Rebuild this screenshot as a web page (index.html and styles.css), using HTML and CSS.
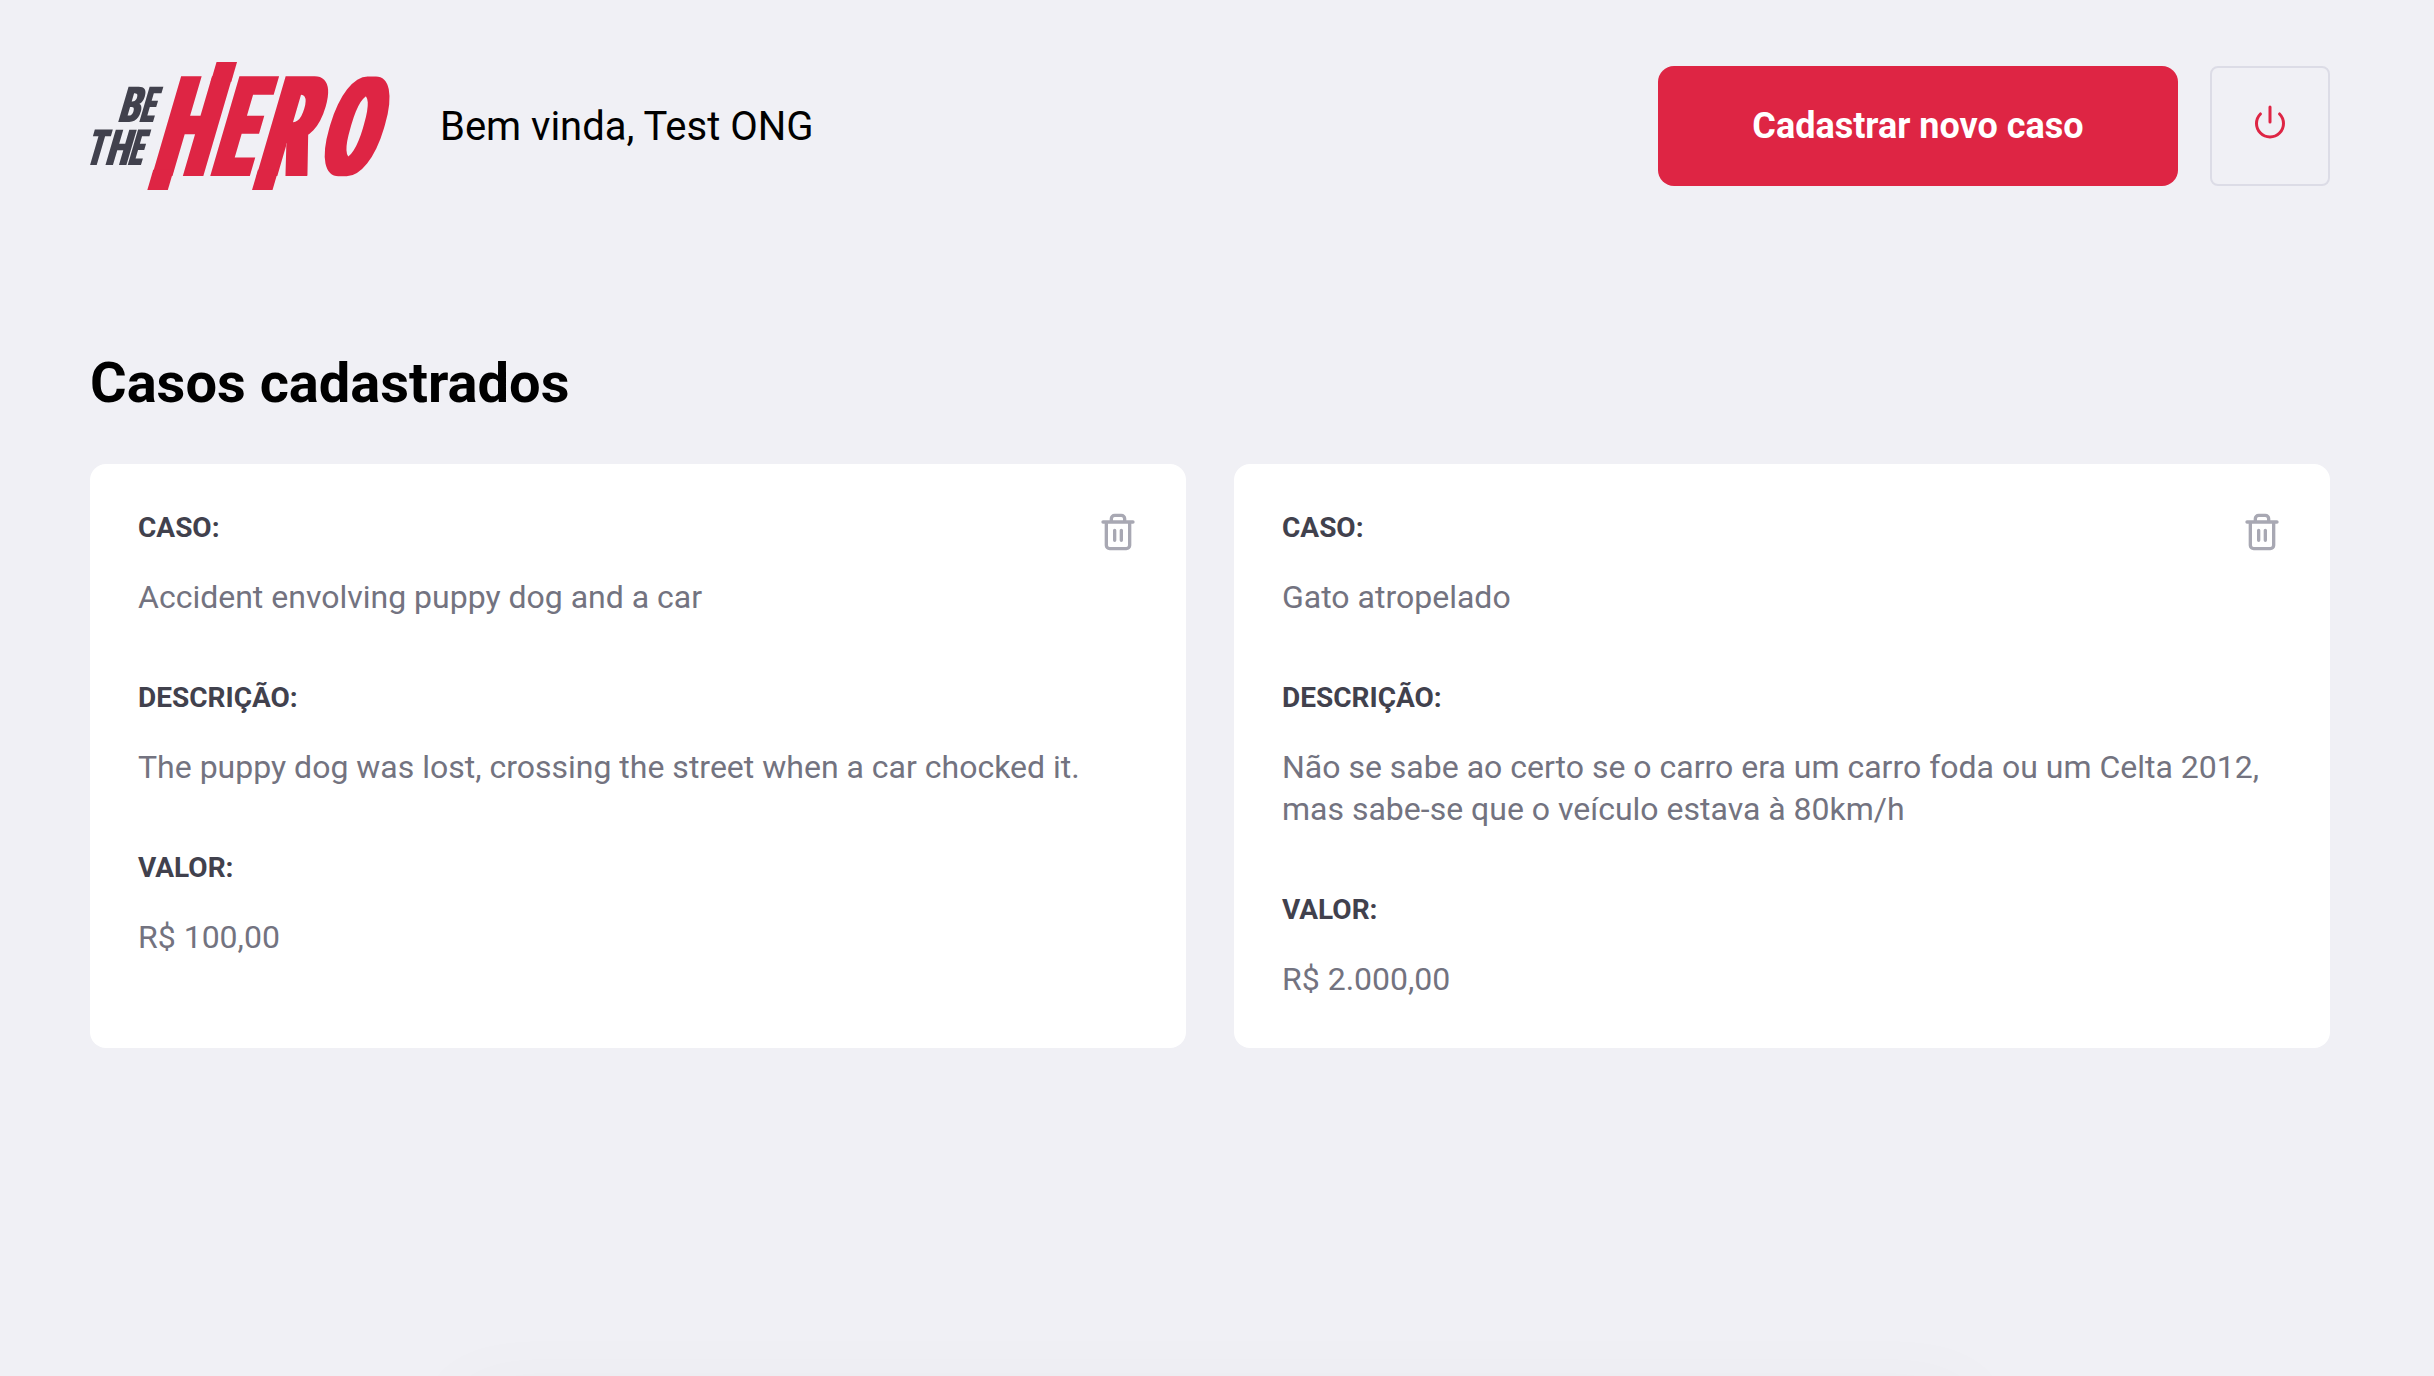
FILE: index.html
```html
<!DOCTYPE html>
<html lang="pt-BR">
<head>
<meta charset="utf-8">
<title>Be The Hero</title>
<link rel="stylesheet" href="styles.css">
</head>
<body>
<div class="profile">
  <header class="header">
    <svg class="logo" viewBox="90 62 302 128" role="img" aria-label="Be The Hero">
      <defs>
        <filter id="widen-small" x="-5%" y="-5%" width="110%" height="110%" color-interpolation-filters="sRGB"><feMorphology operator="dilate" radius="1 0"/></filter>
        <filter id="widen-big" x="-5%" y="-5%" width="110%" height="110%" color-interpolation-filters="sRGB"><feMorphology operator="dilate" radius="4 0"/></filter>
      </defs>
      <g class="logo-small" filter="url(#widen-small)">
        <g transform="translate(117.7 122.3) skewX(-16.3)">
          <text transform="translate(-.2 0) scale(.64 1)">B</text>
          <text transform="translate(21.4 0) scale(.48 1)">E</text>
        </g>
        <g transform="translate(84.2 165) skewX(-16.3)">
          <text transform="translate(.8 0) scale(.54 1)">T</text>
          <text transform="translate(20.5 0) scale(.64 1)">H</text>
          <text transform="translate(43.3 0) scale(.46 1)">E</text>
        </g>
      </g>
      <g class="logo-big" filter="url(#widen-big)">
        <g transform="translate(151.5 175.7) skewX(-16.3)">
          <text transform="translate(.4 0) scale(.52 1)">H</text>
          <text transform="translate(59.3 0) scale(.46 1)">E</text>
          <text transform="translate(105 0) scale(.53 1)">R</text>
          <text transform="translate(165.2 -1.2) scale(.535 .975)">O</text>
          <rect x="4" y="-6" width="12.5" height="20.3"/>
          <rect x="35.8" y="-113.7" width="12.5" height="20"/>
          <rect x="108.7" y="-6" width="12.5" height="20.3"/>
        </g>
      </g>
    </svg>
    <span class="welcome">Bem vinda, Test ONG</span>
    <a class="button">Cadastrar novo caso</a>
    <button class="logout" type="button" aria-label="Sair">
      <svg class="icon-power" viewBox="0 0 24 24"><path d="M18.36 6.64a9 9 0 1 1-12.73 0"/><path d="M12 2v10"/></svg>
    </button>
  </header>

  <h1 class="title">Casos cadastrados</h1>

  <ul class="cases">
    <li class="case">
      <div class="case-head">
        <strong class="label">CASO:</strong>
        <button class="delete" type="button" aria-label="Excluir">
          <svg class="icon-trash" viewBox="0 0 24 24"><path d="M3 6h18M19 6v14a2 2 0 0 1-2 2H7a2 2 0 0 1-2-2V6m3 0V4a2 2 0 0 1 2-2h4a2 2 0 0 1 2 2v2M10 11v6M14 11v6"/></svg>
        </button>
      </div>
      <p class="value">Accident envolving puppy dog and a car</p>
      <strong class="label">DESCRIÇÃO:</strong>
      <p class="value">The puppy dog was lost, crossing the street when a car chocked it.</p>
      <strong class="label">VALOR:</strong>
      <p class="value">R$ 100,00</p>
    </li>
    <li class="case">
      <div class="case-head">
        <strong class="label">CASO:</strong>
        <button class="delete" type="button" aria-label="Excluir">
          <svg class="icon-trash" viewBox="0 0 24 24"><path d="M3 6h18M19 6v14a2 2 0 0 1-2 2H7a2 2 0 0 1-2-2V6m3 0V4a2 2 0 0 1 2-2h4a2 2 0 0 1 2 2v2M10 11v6M14 11v6"/></svg>
        </button>
      </div>
      <p class="value">Gato atropelado</p>
      <strong class="label">DESCRIÇÃO:</strong>
      <p class="value">Não se sabe ao certo se o carro era um carro foda ou um Celta 2012, mas sabe-se que o veículo estava à 80km/h</p>
      <strong class="label">VALOR:</strong>
      <p class="value">R$ 2.000,00</p>
    </li>
  </ul>
</div>
<div class="bottom-shade"></div>
</body>
</html>
```
FILE: styles.css
```css
* { margin: 0; padding: 0; box-sizing: border-box; }

body {
  min-height: 100vh;
  padding-right: 14px;
  overflow: hidden;
  background: #f0f0f5;
  font-family: Roboto, "Liberation Sans", sans-serif;
}

.profile { width: 2240px; margin: 0 auto; padding-top: 62px; }

.header { display: flex; align-items: center; height: 128px; }

.logo { width: 302px; height: 128px; overflow: visible; }
.logo text { font-weight: 900; }
.logo-small { fill: #41414d; font-size: 49.8px; }
.logo-big { fill: #de2544; font-size: 140.3px; }

.welcome { margin-left: 48px; font-size: 40px; letter-spacing: -.02px; }

.button {
  width: 520px;
  height: 120px;
  margin-left: auto;
  border-radius: 16px;
  background: #de2544;
  color: #fff;
  font-size: 36px;
  font-weight: 700;
  line-height: 120px;
  text-align: center;
}

.logout {
  display: flex;
  justify-content: center;
  width: 120px;
  height: 120px;
  margin-left: 32px;
  padding-top: 35.5px;
  border: 2px solid #dcdce6;
  border-radius: 8px;
  background: transparent;
}

.icon-power, .icon-trash {
  fill: none;
  stroke-width: 2;
  stroke-linecap: round;
  stroke-linejoin: round;
}
.icon-power { width: 36px; height: 36px; stroke: #de2544; }
.icon-trash { display: block; width: 40px; height: 40px; stroke: #a8a8b3; }

.title { margin: 160px 0 48px; font-size: 56px; line-height: 66px; }

.cases {
  display: grid;
  grid-template-columns: repeat(2, 1fr);
  gap: 48px;
  list-style: none;
}

.case { padding: 48px; border-radius: 16px; background: #fff; }
.case-head { display: flex; justify-content: space-between; height: 32px; }

.delete { width: 40px; height: 40px; border: 0; background: transparent; }

.label { display: block; color: #41414d; font-size: 28px; line-height: 32px; }

.value { margin-top: 32px; color: #737380; font-size: 32px; line-height: 42px; }
.value + .label { margin-top: 64px; }

.bottom-shade {
  position: fixed;
  bottom: -60px;
  left: 455px;
  width: 1520px;
  height: 40px;
  border-radius: 20px;
  box-shadow: 0 0 80px rgba(0, 0, 0, .05);
}
```
